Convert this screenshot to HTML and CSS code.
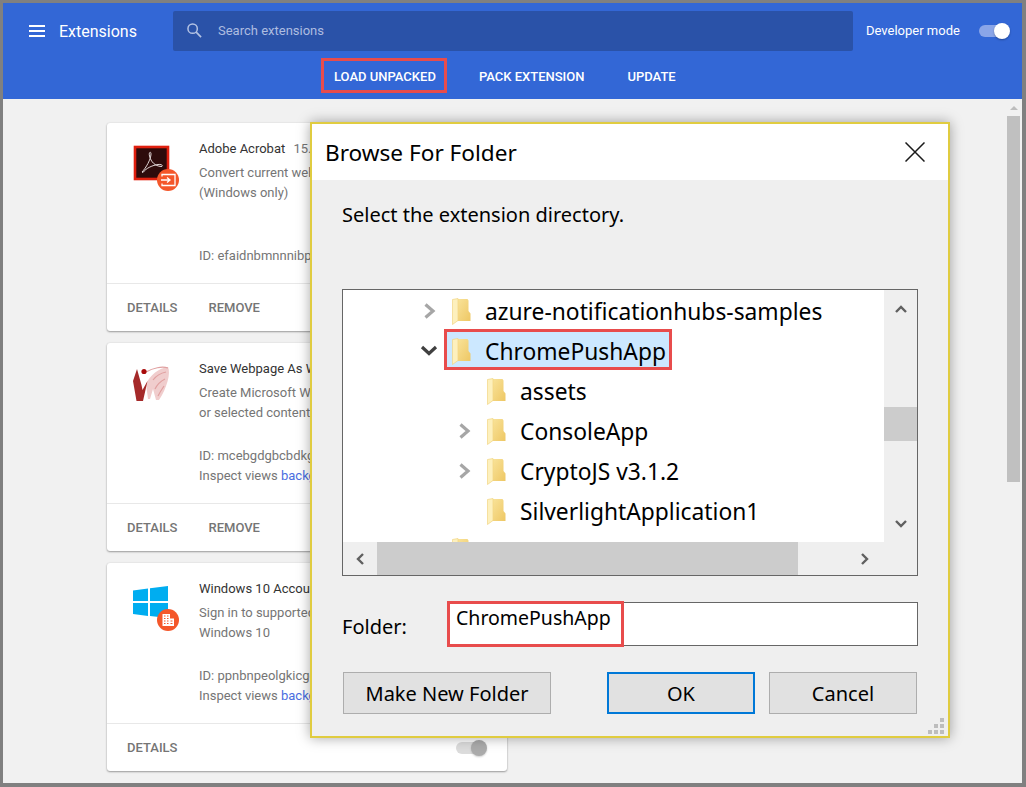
FILE: index.html
```html
<!DOCTYPE html>
<html lang="en">
<head>
<meta charset="utf-8">
<title>Extensions</title>
<link rel="stylesheet" href="styles.css">
</head>
<body>
<svg class="defs" width="0" height="0" aria-hidden="true">
  <defs>
    <linearGradient id="fb" x1="0" y1="0" x2="1" y2="1"><stop offset="0" stop-color="#f9e39a"/><stop offset="1" stop-color="#eec764"/></linearGradient>
    <symbol id="folder" viewBox="0 0 19 27">
      <path d="M5 1H15.500L16.500 2.500V13L18.500 15.500V23H5Z" fill="url(#fb)"/>
      <path d="M0.500 1.500L6 0.500V22.500L0.500 26.500Z" fill="#fdf0bd" stroke="#f2d683" stroke-width="0.700"/>
    </symbol>
  </defs>
</svg>
<div class="frame">
  <header class="topbar">
    <div class="toprow">
      <div class="brand">
        <svg class="menu-icon" viewBox="0 0 16 12"><path d="M0 1h16M0 6h16M0 11h16" stroke="#fff" stroke-width="2"/></svg>
        <span class="brand-name">Extensions</span>
      </div>
      <div class="search">
        <svg class="search-icon" viewBox="0 0 16 16"><circle cx="6" cy="6" r="5" fill="none" stroke="#b4c3e4" stroke-width="1.600"/><path d="M9.800 9.800L15 15" stroke="#b4c3e4" stroke-width="1.800"/></svg>
        <span class="search-text">Search extensions</span>
      </div>
      <span class="devmode">Developer mode</span>
      <span class="toggle toggle-on"></span>
    </div>
    <nav class="actions">
      <button class="action action-marked">LOAD UNPACKED</button>
      <button class="action">PACK EXTENSION</button>
      <button class="action">UPDATE</button>
    </nav>
  </header>

  <main class="content">
    <div class="cards">
      <article class="card">
        <div class="card-main">
          <svg class="ext-icon ext-icon-soft" viewBox="0 0 48 48">
            <rect x="2" y="1" width="33" height="32" fill="#2d0b0b" stroke="#e0200f" stroke-width="2.600"/>
            <path d="M9 26C13 22 18 13 18 8C18 5 15.500 6 16.500 10C18 16 22 20 28 20.500C31 20.500 29 17.800 25 18.500C20 19.200 13 22 10 26.500Z" fill="none" stroke="#e2d8d8" stroke-width="1"/>
            <circle cx="35" cy="34" r="11" fill="#f4572a"/>
            <path d="M29 30.500V28.500H42V39.500H29V37.500M28 34H37M34 31.500L37 34L34 36.500" fill="none" stroke="#fff" stroke-width="1.300"/>
          </svg>
          <div class="ext-info">
            <div class="ext-title">Adobe Acrobat <span class="ext-version">15.</span></div>
            <div class="ext-desc">Convert current webpage<br>(Windows only)</div>
            <div class="ext-ids">ID: efaidnbmnnnibpcaj</div>
          </div>
        </div>
        <div class="card-foot"><span class="foot-btn">DETAILS</span><span class="foot-btn">REMOVE</span><span class="toggle toggle-off"></span></div>
      </article>

      <article class="card">
        <div class="card-main">
          <svg class="ext-icon ext-icon-soft" viewBox="0 0 48 48">
            <path d="M13 18C17 9 26 2 35 1C38 7 34 22 26 34H23L20 23L17 33H15Z" fill="#f0cdcd"/>
            <path d="M13 6C20 2 29 0 35 2M20 14C23 10 28 7 33 6M22 23C24 19 28 15 32 13M25 30C27 26 29 23 31 20" fill="none" stroke="#e0a0a0" stroke-width="1.200"/>
            <path d="M4 3L0 15L3.500 35H10L14.500 15L9.500 24L8.500 19Z" fill="#a52a2a"/>
            <circle cx="11" cy="5.500" r="2.600" fill="#a80a0a"/>
          </svg>
          <div class="ext-info">
            <div class="ext-title">Save Webpage As Word</div>
            <div class="ext-desc">Create Microsoft Word<br>or selected content</div>
            <div class="ext-ids">ID: mcebgdgbcbdkgfij<br>Inspect views <a class="ext-link">background</a></div>
          </div>
        </div>
        <div class="card-foot"><span class="foot-btn">DETAILS</span><span class="foot-btn">REMOVE</span><span class="toggle toggle-off"></span></div>
      </article>

      <article class="card">
        <div class="card-main">
          <svg class="ext-icon" viewBox="0 0 48 48">
            <path d="M0 4.500L15 2.500V15H0ZM17 2.300L35 0V15H17ZM0 17H15V30L0 28ZM17 17H35V32L17 30Z" fill="#00adf0"/>
            <circle cx="35" cy="34" r="11" fill="#f4572a"/>
            <path d="M29.500 28H37V32.500H41V40H29.500Z" fill="#fff"/>
            <path d="M31 30h1.500M34 30h1.500M31 32.500h1.500M34 32.500h1.500M31 35h1.500M34 35h1.500M37.500 35H39.500M31 37.500h1.500M34 37.500h1.500M37.500 37.500H39.500" stroke="#f4572a" stroke-width="1.200"/>
          </svg>
          <div class="ext-info">
            <div class="ext-title">Windows 10 Accounts</div>
            <div class="ext-desc">Sign in to supported<br>Windows 10</div>
            <div class="ext-ids">ID: ppnbnpeolgkicgeg<br>Inspect views <a class="ext-link">background</a></div>
          </div>
        </div>
        <div class="card-foot"><span class="foot-btn">DETAILS</span><span class="toggle toggle-off"></span></div>
      </article>
    </div>
    <div class="page-scroll"><span class="page-arrow"></span><span class="page-thumb"></span></div>
  </main>

  <section class="dialog">
    <div class="dialog-title">
      <span class="dialog-name">Browse For Folder</span>
      <svg class="dialog-close" viewBox="0 0 20 20"><path d="M0.500 0.500L19.500 19.500M19.500 0.500L0.500 19.500" stroke="#1a1a1a" stroke-width="1.500"/></svg>
    </div>
    <div class="dialog-body">
      <p class="dialog-msg">Select the extension directory.</p>
      <div class="tree">
        <div class="tree-list">
          <div class="row depth1">
            <svg class="chev" viewBox="0 0 16 16"><path d="M2.500 1.500L10 8L2.500 14.500" fill="none" stroke="#a6a6a6" stroke-width="3.200"/></svg>
            <div class="item"><svg class="folder"><use href="#folder"/></svg><span class="item-name">azure-notificationhubs-samples</span></div>
          </div>
          <div class="row depth1">
            <svg class="chev" viewBox="0 0 16 16"><path d="M-1 4L6 10.500L13 4" fill="none" stroke="#404040" stroke-width="3.200"/></svg>
            <div class="item item-selected"><svg class="folder"><use href="#folder"/></svg><span class="item-name">ChromePushApp</span></div>
          </div>
          <div class="row depth2">
            <span class="chev"></span>
            <div class="item"><svg class="folder"><use href="#folder"/></svg><span class="item-name">assets</span></div>
          </div>
          <div class="row depth2">
            <svg class="chev" viewBox="0 0 16 16"><path d="M2.500 1.500L10 8L2.500 14.500" fill="none" stroke="#a6a6a6" stroke-width="3.200"/></svg>
            <div class="item"><svg class="folder"><use href="#folder"/></svg><span class="item-name">ConsoleApp</span></div>
          </div>
          <div class="row depth2">
            <svg class="chev" viewBox="0 0 16 16"><path d="M2.500 1.500L10 8L2.500 14.500" fill="none" stroke="#a6a6a6" stroke-width="3.200"/></svg>
            <div class="item"><svg class="folder"><use href="#folder"/></svg><span class="item-name">CryptoJS v3.1.2</span></div>
          </div>
          <div class="row depth2">
            <span class="chev"></span>
            <div class="item"><svg class="folder"><use href="#folder"/></svg><span class="item-name">SilverlightApplication1</span></div>
          </div>
          <div class="row depth1">
            <span class="chev"></span>
            <div class="item"><svg class="folder"><use href="#folder"/></svg></div>
          </div>
        </div>
        <div class="vscroll">
          <svg class="sb-arrow" viewBox="0 0 12 8"><path d="M1 7L6 2L11 7" fill="none" stroke="#606060" stroke-width="2.400"/></svg>
          <span class="vthumb"></span>
          <svg class="sb-arrow" viewBox="0 0 12 8"><path d="M1 1L6 6L11 1" fill="none" stroke="#606060" stroke-width="2.400"/></svg>
        </div>
        <div class="hscroll">
          <svg class="sb-arrow-h" viewBox="0 0 8 12"><path d="M7 1L2 6L7 11" fill="none" stroke="#606060" stroke-width="2.400"/></svg>
          <span class="hthumb"></span>
          <svg class="sb-arrow-h" viewBox="0 0 8 12"><path d="M1 1L6 6L1 11" fill="none" stroke="#606060" stroke-width="2.400"/></svg>
        </div>
        <div class="corner"></div>
      </div>
      <div class="folder-row">
        <span class="folder-label">Folder:</span>
        <div class="folder-input"><span class="folder-value">ChromePushApp</span></div>
      </div>
      <div class="button-row">
        <button class="win-btn win-btn-new">Make New Folder</button>
        <div class="button-group">
          <button class="win-btn win-btn-ok">OK</button>
          <button class="win-btn">Cancel</button>
        </div>
      </div>
      <svg class="grip" viewBox="0 0 18 18"><path d="M13 1h4v4h-4zM7 7h4v4H7zM13 7h4v4h-4zM1 13h4v4H1zM7 13h4v4H7zM13 13h4v4h-4z" fill="#bdbdbd"/></svg>
    </div>
  </section>
</div>
</body>
</html>
```

FILE: styles.css
```css
*, *::before, *::after { box-sizing: border-box; }
html, body { margin: 0; padding: 0; height: 100%; }
body { font-family: Roboto, "Liberation Sans", sans-serif; overflow: hidden; }
.defs { position: absolute; }

.frame {
  position: relative;
  width: 1026px;
  height: 787px;
  border: solid #808080;
  border-width: 3px 4px 4px 3px;
  display: flex;
  flex-direction: column;
  overflow: hidden;
  background: #f1f1f1;
}

/* top bar */
.topbar {
  flex: none;
  height: 96px;
  background: #3367d6;
  padding-top: 8px;
  display: flex;
  flex-direction: column;
  gap: 7px;
}
.toprow { display: flex; align-items: center; height: 40px; }
.brand { width: 170px; padding-left: 26px; display: flex; align-items: center; gap: 14px; }
.menu-icon { width: 16px; height: 12px; flex: none; }
.brand-name { color: #fff; font-size: 16px; font-weight: 400; }
.search {
  width: 680px;
  height: 40px;
  background: #2a52a8;
  border-radius: 2px;
  display: flex;
  align-items: center;
  padding: 0 0 2px 14px;
  gap: 16px;
}
.search-icon { width: 15px; height: 15px; flex: none; }
.search-text { color: #aebde0; font-size: 13px; }
.devmode { color: #fff; font-size: 13px; margin: 0 0 2px 13px; width: 113px; }
.toggle { position: relative; display: block; width: 27px; height: 12px; border-radius: 6px; flex: none; }
.toggle::after {
  content: "";
  position: absolute;
  top: -2px;
  left: 15px;
  width: 16px;
  height: 16px;
  border-radius: 50%;
}
.toggle-on { background: #8aa5e8; }
.toggle-on::after { background: #fff; box-shadow: 0 1px 2px rgba(0,0,0,.3); }
.toggle-off { background: #dcdcdc; margin-left: auto; margin-right: 24px; }
.toggle-off::after { background: #ababab; box-shadow: 0 1px 2px rgba(0,0,0,.2); }

.actions { display: flex; align-items: center; height: 35px; padding-left: 318px; gap: 17px; }
.action {
  height: 35px;
  padding: 2px 10px 0;
  background: none;
  border: 3px solid transparent;
  color: #fff;
  font: 500 13px Roboto, sans-serif;
}
.action-marked { border-color: #e84c4c; padding-right: 8px; margin-right: 2px; }

/* page */
.content { flex: 1; min-height: 0; display: flex; }
.cards { flex: 1; padding: 24px 0 0 104px; display: flex; flex-direction: column; gap: 12px; }
.card {
  width: 400px;
  height: 208px;
  flex: none;
  background: #fff;
  border-radius: 3px;
  box-shadow: 0 1px 2px rgba(0,0,0,.35), 0 0 2px rgba(0,0,0,.1);
  display: flex;
  flex-direction: column;
}
.card-main { height: 161px; display: flex; border-bottom: 1px solid #e8e8e8; }
.ext-icon { width: 48px; height: 48px; flex: none; margin: 23px 18px 0 26px; overflow: visible; }
.ext-icon-soft { filter: blur(.35px); }
.ext-info { flex: 1; min-width: 0; padding: 16px 0 17px 0; display: flex; flex-direction: column; white-space: nowrap; overflow: hidden; }
.ext-title { color: #333; font-size: 13px; line-height: 20px; }
.ext-version { color: #757575; margin-left: 5px; }
.ext-desc { color: #757575; font-size: 13px; line-height: 20px; margin-top: 4px; }
.ext-ids { color: #757575; font-size: 13px; line-height: 20px; margin-top: auto; }
.ext-link { color: #4a6ee0; }
.card-foot { flex: 1; display: flex; align-items: center; padding-left: 20px; gap: 31px; }
.foot-btn { color: #757575; font-size: 13px; font-weight: 500; }

.page-scroll { width: 13px; margin-right: 2px; display: flex; flex-direction: column; align-items: center; flex: none; padding-top: 7px; }
.page-arrow { width: 0; height: 0; border: 4px solid transparent; border-top: 0; border-bottom: 4px solid #bdbdbd; margin-bottom: 6px; }
.page-thumb { width: 13px; height: 366px; background: #c0c0c0; }

/* dialog */
.dialog {
  position: absolute;
  left: 307px;
  top: 119px;
  width: 640px;
  height: 616px;
  border: 2px solid #e0cc40;
  background: #efefef;
  box-shadow: 0 0 12px rgba(0,0,0,.35);
  display: flex;
  flex-direction: column;
  font-family: "Noto Sans", "Open Sans", sans-serif;
  color: #000;
}
.dialog-title {
  flex: none;
  height: 56px;
  background: #fff;
  display: flex;
  align-items: center;
  justify-content: space-between;
  padding: 0 23px 0 13px;
}
.dialog-name { font-size: 22.600px; }
.dialog-close { width: 20px; height: 20px; }
.dialog-body { position: relative; flex: 1; padding: 20px 30px 0; }
.dialog-msg { margin: 0; font-size: 20px; line-height: 30px; }

.tree {
  margin-top: 59px;
  height: 287px;
  border: 1px solid #666;
  display: grid;
  grid-template-columns: 541px 33px;
  grid-template-rows: 252px 33px;
}
.tree-list { background: #fff; overflow: hidden; padding-top: 1px; }
.row { height: 40px; display: flex; }
.depth1 { padding-left: 72px; }
.depth2 { padding-left: 107px; }
.chev { width: 16px; height: 16px; margin: 12px 8px 0 8px; flex: none; overflow: visible; }
.item { height: 35px; margin-top: 1px; padding: 0 3px 0 5px; display: flex; align-items: center; gap: 14px; white-space: nowrap; }
.item-selected { background: #cce8ff; outline: 3px solid #e84c4c; }
.folder { width: 19px; height: 27px; flex: none; margin-top: 3px; }
.item-name { font-size: 22.800px; position: relative; top: 2px; }
.vscroll { display: flex; flex-direction: column; align-items: center; background: #efefef; padding-top: 15px; }
.sb-arrow { width: 12px; height: 8px; flex: none; }
.vthumb { width: 33px; height: 34px; background: #cccccc; margin-top: 94px; margin-bottom: 79px; }
.hscroll { grid-column: 1; display: flex; align-items: center; background: #efefef; }
.sb-arrow-h { width: 8px; height: 12px; flex: none; }
.sb-arrow-h:first-child { margin: 0 13px; }
.sb-arrow-h:last-child { margin-left: 63px; }
.hthumb { width: 421px; height: 33px; background: #cccccc; }
.corner { background: #efefef; }

.folder-row { display: flex; margin-top: 26px; height: 44px; }
.folder-label { width: 106px; font-size: 20px; line-height: 50px; }
.folder-input { position: relative; flex: 1; background: #fff; border: 1px solid #666; padding-left: 7px; }
.folder-input::after {
  content: "";
  position: absolute;
  left: -2px;
  top: -2px;
  width: 177px;
  height: 46px;
  border: 3px solid #e84c4c;
}
.folder-value { font-size: 19.500px; line-height: 30px; display: block; }

.button-row { display: flex; justify-content: space-between; margin: 26px 1px 0; }
.button-group { display: flex; gap: 14px; }
.win-btn {
  width: 148px;
  height: 42px;
  background: #e1e1e1;
  border: 1px solid #adadad;
  font: 20px "Noto Sans", "Open Sans", sans-serif;
  color: #000;
  padding: 0;
}
.win-btn-new { width: 208px; }
.win-btn-ok { border: 2px solid #0078d7; }
.grip { position: absolute; right: 3px; bottom: 1px; width: 18px; height: 18px; }
```
